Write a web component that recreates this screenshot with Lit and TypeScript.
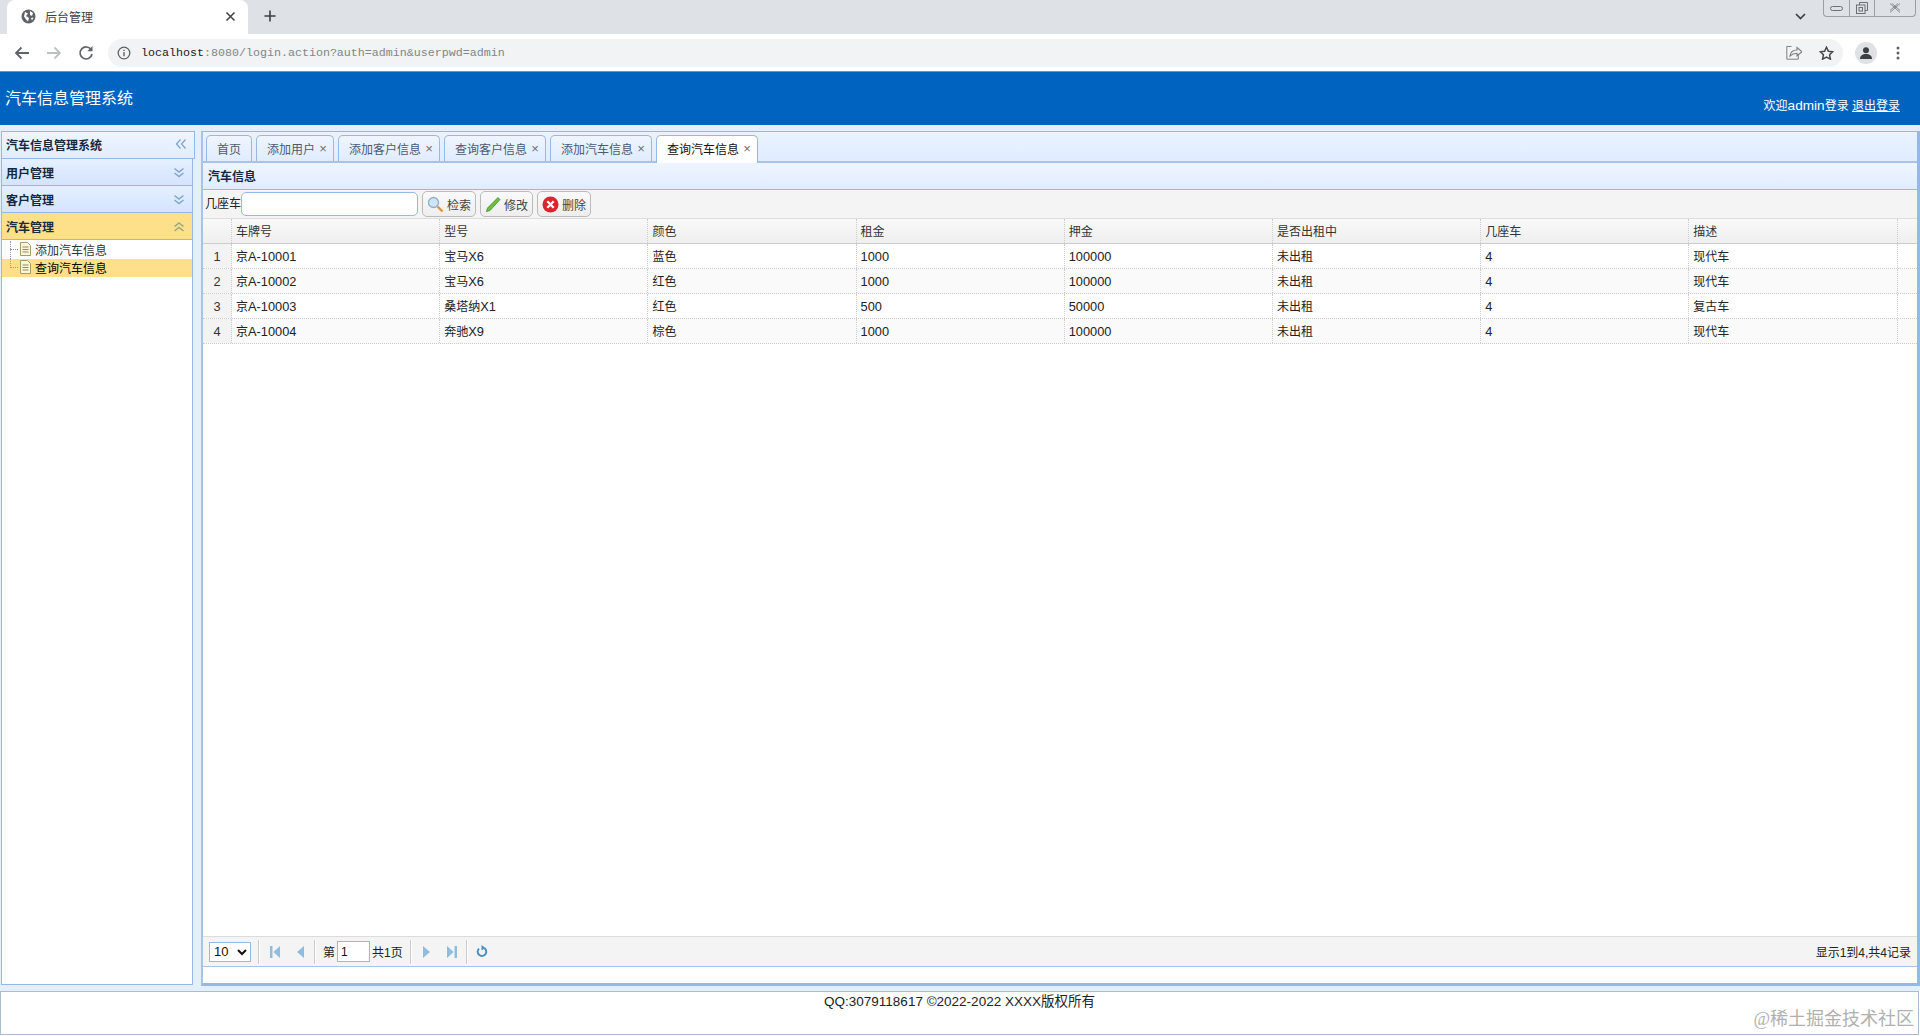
import { LitElement, html, css, svg } from "lit";
import { customElement } from "lit/decorators.js";

const cols = ["车牌号", "型号", "颜色", "租金", "押金", "是否出租中", "几座车", "描述"];
const rows = [
  ["京A-10001", "宝马X6", "蓝色", "1000", "100000", "未出租", "4", "现代车"],
  ["京A-10002", "宝马X6", "红色", "1000", "100000", "未出租", "4", "现代车"],
  ["京A-10003", "桑塔纳X1", "红色", "500", "50000", "未出租", "4", "复古车"],
  ["京A-10004", "奔驰X9", "棕色", "1000", "100000", "未出租", "4", "现代车"],
];
const tabs = ["添加用户", "添加客户信息", "查询客户信息", "添加汽车信息", "查询汽车信息"];

const ic = (w: number, h: number, body: unknown) =>
  html`<svg class="ic" width=${w} height=${h} viewBox="0 0 ${w} ${h}">${body}</svg>`;

/* Latin runs in the reference are set larger than the CJK around them */
const mixed = (s: string) =>
  s.split(/([\x00-\x7f]+)/).map((p, i) => (i % 2 ? html`<span class="l">${p}</span>` : p));

const chevDown = ic(12, 12, svg`<path d="M1.500 1.500 6 5l4.500-3.500M1.500 6 6 9.500 10.500 6" fill="none" stroke="#7fa5c9" stroke-width="1.500"/>`);
const chevUp = ic(12, 12, svg`<path d="M1.500 5.500 6 2l4.500 3.500M1.500 10 6 6.500l4.500 3.500" fill="none" stroke="#9aa87a" stroke-width="1.500"/>`);
const chevLeft = ic(12, 12, svg`<path d="M5.500 1.500 1.500 6l4 4.500M10.500 1.500 6.500 6l4 4.500" fill="none" stroke="#7fa5c9" stroke-width="1.300"/>`);
const fileIcon = ic(13, 14, svg`<path d="M1.500.5h7l3 3v10h-10z" fill="#fdf6d8" stroke="#a39a6a"/><path d="M3.500 5h6M3.500 7.500h6M3.500 10h6" stroke="#8f8a60"/>`);

@customElement("app-root")
export class AppRoot extends LitElement {
  static styles = css`
    :host { display: block; width: 1920px; height: 1036px; position: relative; overflow: hidden; background: #fff;
      font-family: "Liberation Sans", "Noto Sans CJK SC", sans-serif; font-size: 12px; color: #222; }
    * { box-sizing: border-box; }
    .ic { display: block; flex: none; }
    .l { font-size: 12.8px; }
    .page { display: flex; flex-direction: column; height: 1036px; }

    .strip { height: 34px; background: #dee1e6; display: flex; align-items: flex-end; flex: none; padding-left: 7px; }
    .btab { width: 241px; height: 34px; background: #fff; border-radius: 8px 8px 0 0; display: flex; align-items: center; padding: 0 12px 2px 14px; font-size: 12px; color: #3c4043; gap: 9px; }
    .btab span { flex: 1; }
    .newtab { margin-left: 16px; height: 34px; display: flex; align-items: center; padding-bottom: 2px; }
    .strip-end { margin-left: auto; display: flex; align-items: flex-start; height: 34px; }
    .tabs-menu { margin: 13px 17px 0 0; }
    .winbtns { width: 93px; height: 17px; border: 1px solid #9aa0a8; border-top: none; border-radius: 0 0 4px 4px; display: flex; margin-right: 4px; }
    .winbtns div { flex: none; width: 25px; display: flex; align-items: center; justify-content: center; border-left: 1px solid #9aa0a8; }
    .winbtns div:first-child { border-left: none; }
    .winbtns div:last-child { flex: 1; }

    .bar { height: 37px; background: #fff; display: flex; align-items: center; flex: none; padding-left: 14px; }
    .navs { display: flex; gap: 16px; align-items: center; width: 95px; }
    .omni { flex: 1; height: 28px; background: #f1f3f4; border-radius: 14px; display: flex; align-items: center; padding: 0 9px; margin-right: 12px; margin-left: -1px; }
    .url { font-family: "Liberation Mono", monospace; font-size: 11.67px; color: #80868b; margin-left: 10px; flex: 1; }
    .url b { font-weight: normal; color: #202124; }
    .omni-right { display: flex; gap: 17px; align-items: center; }
    .avatar { width: 22px; height: 22px; border-radius: 50%; background: #dfe1e5; display: flex; align-items: center; justify-content: center; margin-right: 19px; }
    .dots { margin-right: 20px; }

    .hdr { height: 54px; flex: none; background: #0063c0; border-top: 1px solid #5a9bd8; color: #fff; display: flex; position: relative; padding: 0 20px 0 5px; justify-content: space-between; }
    .hdr h1 { margin: 17px 0 0; font-size: 16px; font-weight: normal; line-height: 20px; }
    .hdr .who { align-self: flex-end; margin-bottom: 11px; font-size: 12px; line-height: 16px; }
    .hdr .who .l { font-size: 13.6px; }
    .hdr a { color: #fff; text-decoration: underline; }

    .main { height: 866px; flex: none; display: flex; background: #e4effd; padding: 6px 0 5px 0; gap: 6px; }
    .west { width: 195px; flex: none; display: flex; flex-direction: column; padding: 0 0 1px 1px; }
    .west-title { height: 28px; flex: none; background: linear-gradient(#eff5ff, #e0ecff); border: 1px solid #95b8e7; display: flex; align-items: center; justify-content: space-between; padding: 0 7px 2px 4px; font-weight: bold; color: #15283f; font-size: 12px; }
    .acc { width: 192px; flex: 1; border: 1px solid #95b8e7; border-top: none; background: #fff; display: flex; flex-direction: column; }
    .acc-h { height: 27px; flex: none; background: linear-gradient(#e6f0ff, #d3e4fd); border-bottom: 1px solid #95b8e7; display: flex; align-items: center; justify-content: space-between; padding: 0 7px 0 4px; font-weight: bold; color: #15283f; }
    .acc-h .ic { margin-top: 2px; }
    .acc-h.on { background: #ffe08a; color: #1c2a3a; }
    .tree { padding-top: 1px; }
    .node { height: 18px; display: flex; align-items: center; color: #333; padding: 0 0 2px 17px; gap: 3px; position: relative; }
    .node::before { content: ""; position: absolute; left: 8px; top: 8px; width: 8px; border-top: 1px dotted #999; }
    .node.a::after { content: ""; position: absolute; left: 8px; top: 0; height: 18px; border-left: 1px dotted #999; }
    .node.b::after { content: ""; position: absolute; left: 8px; top: 0; height: 9px; border-left: 1px dotted #999; }
    .node.sel { background: #ffe08a; color: #000; }

    .center { flex: 1; min-width: 0; display: flex; flex-direction: column; background: #e4effd; border: 1px solid #95b8e7; border-right: 3px solid #95b8e7; border-bottom: 3px solid #95b8e7; border-left: 2px solid #a9c3e8; }
    .tabbar { height: 31px; flex: none; padding: 3px 0 0 3px; display: flex; gap: 4px; background: linear-gradient(#e9f2ff, #e0ecff); border-bottom: 2px solid #a9c3e8; }
    .tab { height: 26px; border: 1px solid #95b8e7; border-bottom: none; border-radius: 5px 5px 0 0; background: linear-gradient(#eff5ff, #e0ecff); padding: 0 6px 0 10px; display: flex; align-items: center; gap: 4px; color: #4a5b70; }
    .tab.home { padding: 0 10px; }
    .tab.on { background: #fff; color: #111; height: 28px; padding-bottom: 2px; }
    .tab i { font-style: normal; font-size: 13px; color: #5f7285; width: 8px; text-align: center; }

    .pt { height: 27px; flex: none; background: linear-gradient(#eff5ff, #e0ecff); border-bottom: 1px solid #95b8e7; display: flex; align-items: center; padding: 0 0 1px 5px; font-weight: bold; color: #15283f; }
    .tools { height: 29px; flex: none; background: #f4f4f4; display: flex; align-items: center; padding: 0 0 0 2px; border-bottom: 1px solid #ddd; }
    .tools .lbl { padding-bottom: 3px; }
    .tools input { width: 177px; height: 24px; border: 1px solid #95b8e7; border-radius: 5px; background: #fff; margin-right: 4px; padding: 0; }
    .btn { height: 26px; border: 1px solid #bbb; border-radius: 5px; background: linear-gradient(#fafafa, #eee); display: flex; align-items: center; padding: 0 4px; gap: 3px; margin-right: 4px; color: #444; }

    .grid { flex: 1; min-height: 0; background: #fff; display: flex; flex-direction: column; }
    .g-row { display: grid; grid-template-columns: 29px repeat(8, 208.2px); height: 25px; flex: none; border-bottom: 1px dotted #ccc; align-items: center; }
    .g-row.head { background: linear-gradient(#f9f9f9, #efefef); border-bottom: 1px solid #ccc; }
    .g-row.even { background: #fafafa; }
    .cell { height: 100%; display: flex; align-items: center; padding-left: 4px; border-right: 1px dotted #ccc; color: #222; white-space: nowrap; line-height: 16px; }
    .cell > div { padding-top: 1px; }
    .head .cell { color: #333; }
    .num { background: #f3f3f3; justify-content: center; padding: 0; border-right: 1px dotted #ccc; color: #333; }
    .head .num { background: transparent; }

    .pager { margin-top: auto; height: 31px; flex: none; border-top: 1px solid #dcdcdc; background: #f4f4f4; border-bottom: 1px solid #a9c3e8; display: flex; align-items: center; padding: 0 6px 0 6px; }
    .pager select { width: 42px; height: 20px; font: 13px "Liberation Sans", sans-serif; border: 1px solid #95b8e7; background: #fff; color: #111; margin-right: 6px; padding: 0; }
    .sep { width: 2px; height: 24px; background: #ccc; margin: 0 2px 0 1px; border-right: 1px solid #fff; flex: none; }
    .pg { width: 25.5px; flex: none; display: flex; justify-content: center; }
    .pager input { width: 33px; height: 21px; border: 1px solid #95b8e7; margin: 0 2px; padding: 0 0 0 3px; font: 12px "Liberation Sans", sans-serif; color: #111; background: #fff; }
    .pre { margin-left: 5px; }
    .post { margin-right: 6px; }
    .info { margin-left: auto; color: #222; }
    .pane-foot { height: 16px; flex: none; background: #fff; }

    .foot { flex: 1; margin: 0 1px 1px 0; border: 1px solid #a9bdd2; background: #fff; text-align: center; line-height: 16px; padding-top: 2px; color: #222; font-size: 13.5px; }
    .mark { position: absolute; right: 6px; top: 1007px; font-family: "Liberation Serif", "Noto Sans CJK SC", serif; font-size: 18px; color: #b0b0b0; line-height: 24px; }
  `;

  render() {
    return html`<div class="page">
      <div class="strip">
        <div class="btab">
          ${ic(15, 15, svg`<circle cx="7.500" cy="7.500" r="7" fill="#5f6368"/><path d="M4 3l3 1.500L5 7l3 2-1 3.500-2-2-2-3zM9 2l3 2-1 3-2-1zM10 9l2.500-.5-1.500 3z" fill="#fff"/>`)}
          <span>后台管理</span>
          ${ic(11, 11, svg`<path d="M1.500 1.500l8 8M9.500 1.500l-8 8" stroke="#444" stroke-width="1.600"/>`)}
        </div>
        <div class="newtab">${ic(12, 12, svg`<path d="M6 .5v11M.5 6h11" stroke="#3c4043" stroke-width="1.600"/>`)}</div>
        <div class="strip-end">
          <div class="tabs-menu">${ic(11, 7, svg`<path d="M1 1l4.500 4.500L10 1" fill="none" stroke="#3c4043" stroke-width="1.700"/>`)}</div>
          <div class="winbtns">
            <div>${ic(13, 5, svg`<rect x=".5" y=".5" width="12" height="4" rx="2" fill="none" stroke="#6b7077"/>`)}</div>
            <div>${ic(12, 12, svg`<path d="M3.500 3V.5h8v8H9" fill="none" stroke="#6b7077"/><rect x=".5" y="3" width="8.500" height="8.500" fill="none" stroke="#6b7077"/><rect x="3" y="5.500" width="3.500" height="3.500" fill="none" stroke="#6b7077"/>`)}</div>
            <div>${ic(12, 10, svg`<path d="M1 .5l10 9M11 .5l-10 9M3 .5l8 7M9 .5l-8 7" fill="none" stroke="#777" stroke-width=".8"/>`)}</div>
          </div>
        </div>
      </div>
      <div class="bar">
        <div class="navs">
          ${ic(16, 14, svg`<path d="M15 7H2M7.500 1.500 2 7l5.500 5.500" fill="none" stroke="#5f6368" stroke-width="1.800"/>`)}
          ${ic(16, 14, svg`<path d="M1 7h13M8.500 1.500 14 7l-5.500 5.500" fill="none" stroke="#bdc1c6" stroke-width="1.800"/>`)}
          ${ic(16, 16, svg`<path d="M13.300 5A6 6 0 1 0 14 9" fill="none" stroke="#5f6368" stroke-width="1.700"/><path d="M14.500 1v5.200H9.300z" fill="#5f6368"/>`)}
        </div>
        <div class="omni">
          ${ic(14, 14, svg`<circle cx="7" cy="7" r="5.800" fill="none" stroke="#5f6368" stroke-width="1.300"/><path d="M7 6v4.200M7 3.700v1.300" stroke="#5f6368" stroke-width="1.400"/>`)}
          <div class="url"><b>localhost</b>:8080/login.action?auth=admin&amp;userpwd=admin</div>
          <div class="omni-right">
            ${ic(16, 15, svg`<path d="M5.500 1.500H.8v12.700h11.500V10" fill="none" stroke="#7d8186" stroke-width="1"/><path d="M4 11c.5-4 3-6 7-6V2.500l5 4.300-5 4V8.300c-3 0-5 .7-7 2.700z" fill="none" stroke="#7d8186" stroke-width="1.100"/>`)}
            ${ic(15, 14, svg`<path d="M7.500 1.200l1.900 4 4.300.6-3.100 3 .8 4.300-3.900-2.100-3.900 2.100.8-4.300-3.100-3 4.300-.6z" fill="none" stroke="#45494e" stroke-width="1.500"/>`)}
          </div>
        </div>
        <div class="avatar">${ic(12, 12, svg`<circle cx="6" cy="3.200" r="3" fill="#3c4043"/><path d="M0 12c0-3.500 2.500-5 6-5s6 1.500 6 5z" fill="#3c4043"/>`)}</div>
        <div class="dots">${ic(4, 14, svg`<circle cx="2" cy="2" r="1.500" fill="#5f6368"/><circle cx="2" cy="7" r="1.500" fill="#5f6368"/><circle cx="2" cy="12" r="1.500" fill="#5f6368"/>`)}</div>
      </div>

      <div class="hdr">
        <h1>汽车信息管理系统</h1>
        <div class="who">欢迎<span class="l">admin</span>登录 <a href="#">退出登录</a></div>
      </div>

      <div class="main">
        <div class="west">
          <div class="west-title"><span>汽车信息管理系统</span>${chevLeft}</div>
          <div class="acc">
            <div class="acc-h"><span>用户管理</span>${chevDown}</div>
            <div class="acc-h"><span>客户管理</span>${chevDown}</div>
            <div class="acc-h on"><span>汽车管理</span>${chevUp}</div>
            <div class="tree">
              <div class="node a">${fileIcon}<span>添加汽车信息</span></div>
              <div class="node b sel">${fileIcon}<span>查询汽车信息</span></div>
            </div>
          </div>
        </div>

        <div class="center">
          <div class="tabbar">
            <div class="tab home">首页</div>
            ${tabs.map((t, i) => html`<div class="tab ${i === tabs.length - 1 ? "on" : ""}">${t}<i>×</i></div>`)}
          </div>
          <div class="pt">汽车信息</div>
          <div class="tools">
            <span class="lbl">几座车</span><input />
            <div class="btn">
              ${ic(17, 17, svg`<circle cx="6.500" cy="6.500" r="5" fill="#cfe4f7" stroke="#8fb0cc" stroke-width="1.300"/><path d="M10.500 10.500l5 5" stroke="#e0913a" stroke-width="2.400"/>`)}
              <span>检索</span>
            </div>
            <div class="btn">
              ${ic(16, 17, svg`<path d="M13 1.500l2 2L5 14.500l-3.500 1 1-3.500z" fill="#6fbf3f" stroke="#3c8a2c" stroke-width=".8"/>`)}
              <span>修改</span>
            </div>
            <div class="btn">
              ${ic(17, 17, svg`<circle cx="8.500" cy="8.500" r="8" fill="#d8262c"/><path d="M5.300 5.300l6.400 6.400M11.700 5.300l-6.400 6.400" stroke="#fff" stroke-width="2.300"/>`)}
              <span>删除</span>
            </div>
          </div>
          <div class="grid">
            <div class="g-row head">
              <div class="cell num"></div>
              ${cols.map((c) => html`<div class="cell"><div>${c}</div></div>`)}
            </div>
            ${rows.map((r, i) => html`<div class="g-row ${i % 2 ? "even" : ""}">
              <div class="cell num"><div class="l">${i + 1}</div></div>
              ${r.map((c) => html`<div class="cell"><div>${mixed(c)}</div></div>`)}
            </div>`)}
            <div class="pager">
              <select><option>10</option></select>
              <div class="sep"></div>
              <div class="pg">${ic(10, 12, svg`<path d="M0 0h2.500v12H0zM10 0v12L3.500 6z" fill="#8fbde0"/>`)}</div>
              <div class="pg">${ic(7, 12, svg`<path d="M7 0v12L0 6z" fill="#8fbde0"/>`)}</div>
              <div class="sep"></div>
              <span class="pre">第</span><input value="1" /><span class="post">共1页</span>
              <div class="sep"></div>
              <div class="pg">${ic(7, 12, svg`<path d="M0 0v12l7-6z" fill="#8fbde0"/>`)}</div>
              <div class="pg">${ic(10, 12, svg`<path d="M10 0H7.500v12H10zM0 0v12l6.500-6z" fill="#8fbde0"/>`)}</div>
              <div class="sep"></div>
              <div class="pg">${ic(12, 13, svg`<path d="M8.500 3.200a4.300 4.300 0 1 1-5.500.4" fill="none" stroke="#4a90c0" stroke-width="2"/><path d="M5.500 0v5.500L9.500 3z" fill="#4a90c0"/>`)}</div>
              <span class="info">显示1到4,共4记录</span>
            </div>
            <div class="pane-foot"></div>
          </div>
        </div>
      </div>

      <div class="foot">QQ:3079118617 ©2022-2022 XXXX版权所有</div>
      <div class="mark">@稀土掘金技术社区</div>
    </div>`;
  }
}
